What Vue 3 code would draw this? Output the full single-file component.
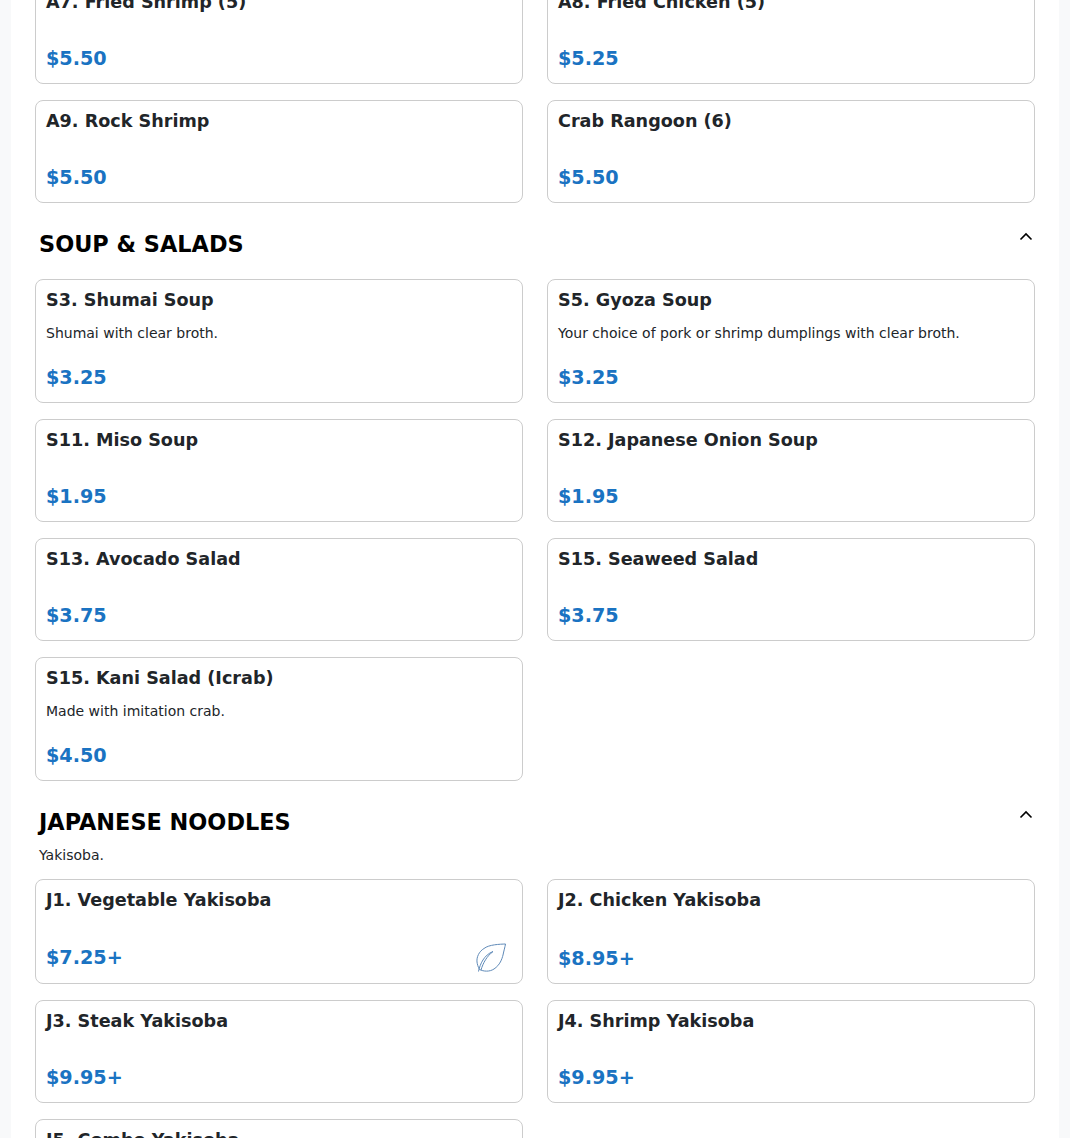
<script setup>
const sections = [
  {
    id: "appetizers",
    items: [
      { name: "A7. Fried Shrimp (5)", price: "$5.50" },
      { name: "A8. Fried Chicken (5)", price: "$5.25" },
      { name: "A9. Rock Shrimp", price: "$5.50" },
      { name: "Crab Rangoon (6)", price: "$5.50" },
    ],
  },
  {
    id: "soup",
    title: "SOUP & SALADS",
    items: [
      { name: "S3. Shumai Soup", desc: "Shumai with clear broth.", price: "$3.25" },
      { name: "S5. Gyoza Soup", desc: "Your choice of pork or shrimp dumplings with clear broth.", price: "$3.25" },
      { name: "S11. Miso Soup", price: "$1.95" },
      { name: "S12. Japanese Onion Soup", price: "$1.95" },
      { name: "S13. Avocado Salad", price: "$3.75" },
      { name: "S15. Seaweed Salad", price: "$3.75" },
      { name: "S15. Kani Salad (Icrab)", desc: "Made with imitation crab.", price: "$4.50" },
    ],
  },
  {
    id: "noodles",
    title: "JAPANESE NOODLES",
    subtitle: "Yakisoba.",
    items: [
      { name: "J1. Vegetable Yakisoba", price: "$7.25+", veg: true },
      { name: "J2. Chicken Yakisoba", price: "$8.95+" },
      { name: "J3. Steak Yakisoba", price: "$9.95+" },
      { name: "J4. Shrimp Yakisoba", price: "$9.95+" },
      { name: "J5. Combo Yakisoba", price: "$10.95+" },
    ],
  },
];
</script>

<template>
  <div class="page">
    <main class="menu">
      <section v-for="section in sections" :key="section.id" class="section">
        <header v-if="section.title" class="section-head">
          <div class="section-top">
            <h2>{{ section.title }}</h2>
            <svg class="chevron" width="16" height="16" viewBox="0 0 16 16" fill="none" stroke="#000" stroke-width="1.6">
              <path d="M2.5 10.5 8 5l5.5 5.5" />
            </svg>
          </div>
          <p v-if="section.subtitle" class="subtitle">{{ section.subtitle }}</p>
        </header>

        <div class="grid">
          <article v-for="item in section.items" :key="item.name" class="card">
            <h3>{{ item.name }}</h3>
            <p v-if="item.desc" class="desc">{{ item.desc }}</p>
            <div class="card-foot">
              <span class="price">{{ item.price }}</span>
              <svg v-if="item.veg" class="leaf" width="30" height="30" viewBox="0 0 30 30" fill="none" stroke="#5f8ab8" stroke-width="1">
                <path d="M29.5 1C24 1.2 13 1.5 8 5.5 3 8.5.5 14 1 19c.3 2 1 5 2.500 7.500 4 2 10 2.500 14.500-.5 6-4 8-10 9-14 .8-4 2-8 2.500-11Z" />
                <path d="M2.500 28.500C4 21 8 12 17 8.500" />
                <path d="M5 27C7 20 11 13 17 8.500" />
              </svg>
            </div>
          </article>
        </div>
      </section>
    </main>
  </div>
</template>

<style>
html,
body {
  margin: 0;
  background: #f8f9fa;
}
</style>

<style scoped>
.page {
  height: 1138px;
  overflow: hidden;
  font-family: "DejaVu Sans", sans-serif;
}

.menu {
  width: 1000px;
  margin: -19px 11px 0;
  padding: 0 24px;
  background: #fff;
}

.section-head {
  padding: 24px 0 13px 4px;
}

.section-top {
  display: flex;
  justify-content: space-between;
  align-items: flex-start;
}

h2 {
  margin: 0 0 5px;
  font-size: 22.4px;
  line-height: 34px;
  font-weight: 700;
  color: #000;
}

.chevron {
  margin: 2px 1px 0 0;
}

.subtitle {
  margin: 0;
  font-size: 14px;
  line-height: 22px;
  color: #212529;
}

.grid {
  display: grid;
  grid-template-columns: 1fr 1fr;
  gap: 16px 24px;
}

.card {
  display: flex;
  flex-direction: column;
  padding: 10px;
  background: #fff;
  border: 1px solid #ccc;
  border-radius: 8px;
}

h3 {
  margin: 0 0 12px;
  font-size: 17.6px;
  line-height: 21px;
  font-weight: 700;
  color: #212529;
}

.desc {
  margin: 0;
  font-size: 14px;
  line-height: 21px;
  color: #212529;
}

.card-foot {
  display: flex;
  justify-content: space-between;
  align-items: center;
  margin-top: auto;
  padding-top: 20px;
}

.price {
  font-size: 19.2px;
  line-height: 28px;
  font-weight: 700;
  color: #1a73c2;
}

.leaf {
  margin-right: 6px;
}
</style>
